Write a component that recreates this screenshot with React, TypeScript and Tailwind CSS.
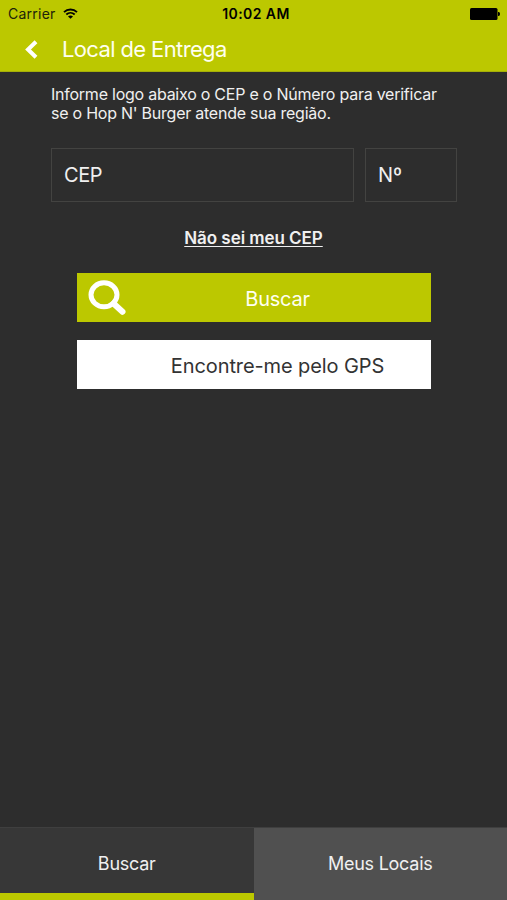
import { useState } from 'react';

type Tab = 'buscar' | 'locais';

const tabs: { id: Tab; label: string }[] = [
  { id: 'buscar', label: 'Buscar' },
  { id: 'locais', label: 'Meus Locais' },
];

function StatusBar() {
  return (
    <div className="grid h-7 grid-cols-3 items-center pl-2 pr-[7px] text-black">
      <div className="flex items-center gap-[7px]">
        <span className="text-[14px] leading-4 tracking-[0.25px] text-[#20220a]">Carrier</span>
        <svg className="h-[11px] w-[15px] -translate-y-px" viewBox="0 0 15 11" fill="none">
          <path d="M1 4.1C4.6 .6 10.4 .6 14 4.1" stroke="currentColor" strokeWidth="1.9" />
          <path d="M3.3 6.5c2.4-2.2 6-2.2 8.4 0" stroke="currentColor" strokeWidth="1.9" />
          <path d="M7.5 10.8 5 8.4c1.4-1.3 3.6-1.3 5 0z" fill="currentColor" />
        </svg>
      </div>
      <span className="whitespace-nowrap pl-[4px] text-center text-[14px] font-semibold leading-4 tracking-[0.4px]">
        10:02 AM
      </span>
      <svg className="h-[12px] w-[30px] justify-self-end" viewBox="0 0 30 12" fill="currentColor">
        <rect width="27.5" height="12" rx="1.5" />
        <path d="M28 4h.6c.8 0 1.4.9 1.4 2s-.6 2-1.4 2H28z" />
      </svg>
    </div>
  );
}

export default function App() {
  const [activeTab, setActiveTab] = useState<Tab>('buscar');
  const [cep, setCep] = useState('');
  const [numero, setNumero] = useState('');

  return (
    <div className="flex h-screen w-full flex-col bg-[#2d2d2d] font-['Inter',sans-serif] text-[#f0f0f0]">
      {/* Header */}
      <header className="h-[72px] border-b border-[#a5af08] bg-[#bcc800]">
        <StatusBar />
        <div className="flex h-[43px] items-center pl-[25px]">
          <button className="text-white" aria-label="Voltar">
            <svg className="h-[19px] w-[13px]" viewBox="0 0 13 19" fill="none">
              <path d="M11 1.7 3 9.5l8 7.8" stroke="currentColor" strokeWidth="4" />
            </svg>
          </button>
          <h1 className="ml-[24px] whitespace-nowrap pb-[2px] text-[22px] leading-7 tracking-[-0.63px] text-[#fffff0]">
            Local de Entrega
          </h1>
        </div>
      </header>

      {/* Form */}
      <main className="flex flex-1 flex-col px-[51px] pt-[13px]">
        <p className="whitespace-nowrap text-[16px] leading-[19px] tracking-[-0.24px]">
          Informe logo abaixo o CEP e o Número para verificar
          <br />
          se o Hop N' Burger atende sua região.
        </p>

        <div className="mt-[25px] flex gap-[11px]">
          <input
            value={cep}
            onChange={(e) => setCep(e.target.value)}
            placeholder="CEP"
            className="h-[54px] w-[303px] border border-[#434341] pl-[12px] text-[20px] tracking-[-0.4px] placeholder-[#f0f0f0] outline-none"
          />
          <input
            value={numero}
            onChange={(e) => setNumero(e.target.value)}
            placeholder="Nº"
            className="h-[54px] w-[92px] border border-[#434341] pl-[12px] text-[20px] placeholder-[#f0f0f0] outline-none"
          />
        </div>

        <button className="mt-[26px] self-center whitespace-nowrap text-[17px] font-semibold leading-5 tracking-[-0.05px] underline underline-offset-2">
          Não sei meu CEP
        </button>

        <div className="ml-[26px] mt-[25px] flex w-[354px] flex-col gap-[18px]">
          <button className="flex h-[49px] items-center bg-[#bcc800] pl-[11px] text-[#fffff0]">
            <svg className="h-[37px] w-[39px] shrink-0 text-white" viewBox="0 0 39 37" fill="none">
              <ellipse cx="16" cy="15.8" rx="13" ry="12" stroke="currentColor" strokeWidth="5" />
              <path d="m25.5 24.5 9 8.3" stroke="currentColor" strokeWidth="6" strokeLinecap="round" />
            </svg>
            <span className="flex-1 pr-[3px] pt-[2px] text-center text-[20px] tracking-[-0.25px]">Buscar</span>
          </button>
          <button className="flex h-[49px] items-center bg-white pl-[50px] text-[#333333]">
            <span className="flex-1 whitespace-nowrap pr-[3px] pt-[2px] text-center text-[20px] tracking-[-0.1px]">
              Encontre-me pelo GPS
            </span>
          </button>
        </div>
      </main>

      {/* Tabs */}
      <nav className="flex h-[73px] border-t border-[#3f3f3f]">
        {tabs.map((tab) => (
          <button
            key={tab.id}
            onClick={() => setActiveTab(tab.id)}
            className={`flex flex-1 items-center justify-center border-b-[7px] text-[18px] tracking-[-0.25px] ${
              activeTab === tab.id ? 'border-[#bcc800] bg-[#373737]' : 'border-[#505050] bg-[#505050]'
            }`}
          >
            <span className="pt-[6px]">{tab.label}</span>
          </button>
        ))}
      </nav>
    </div>
  );
}
